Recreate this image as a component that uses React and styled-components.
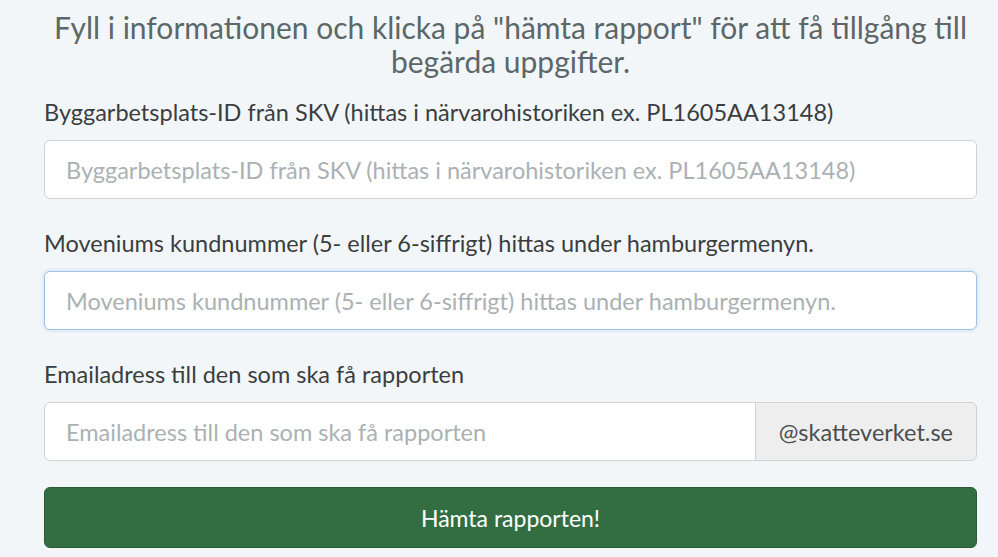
import React from 'react';
import styled, { createGlobalStyle } from 'styled-components';

const GlobalStyle = createGlobalStyle`
  body, html {
    margin: 0;
    padding: 0;
    background-color: #f3f6f9;
    font-family: Lato, "Open Sans", sans-serif;
  }
`;

const Page = styled.div`
  padding: 10px 21px 0 44px;
  box-sizing: border-box;
  width: 998px;
  height: 557px;
  overflow: hidden;
`;

const Heading = styled.h1`
  margin: 0 0 19px;
  font-size: 30px;
  line-height: 34px;
  font-weight: 400;
  color: #5b6768;
  text-align: center;
`;

const Form = styled.form`
  display: flex;
  flex-direction: column;
  gap: 29px;
`;

const Group = styled.div`
  display: flex;
  flex-direction: column;
  gap: 13px;
`;

const Label = styled.label`
  font-size: 23.5px;
  line-height: 30px;
  color: #3a3e3f;
`;

const Input = styled.input`
  box-sizing: border-box;
  height: 59px;
  width: 100%;
  min-width: 0;
  padding: 0 21px;
  font-family: inherit;
  font-size: 23.5px;
  color: #333;
  background: #fff;
  border: 1.5px solid ${p => (p.$focused ? '#9fc4e7' : '#cfd2d3')};
  border-radius: ${p => (p.$joined ? '6px 0 0 6px' : '6px')};
  box-shadow: ${p => (p.$focused ? '0 0 4px rgba(102, 160, 220, 0.35)' : 'none')};
  outline: none;

  &::placeholder {
    color: #abb1b3;
  }
`;

const InputRow = styled.div`
  display: flex;
`;

const Addon = styled.span`
  box-sizing: border-box;
  flex: none;
  display: flex;
  align-items: center;
  height: 59px;
  padding: 0 23px;
  font-size: 23.5px;
  color: #4a4e4f;
  background: #eeeeee;
  border: 1.5px solid #cfd2d3;
  border-radius: 0 6px 6px 0;
  margin-left: -1.5px;
`;

const Submit = styled.button`
  margin-top: -3px;
  height: 61px;
  width: 100%;
  font-family: inherit;
  font-size: 23px;
  color: #fff;
  background: #336e42;
  border: 1px solid #2a5a36;
  border-radius: 6px;
  cursor: pointer;
`;

const fields = [
  { text: 'Byggarbetsplats-ID från SKV (hittas i närvarohistoriken ex. PL1605AA13148)' },
  { text: 'Moveniums kundnummer (5- eller 6-siffrigt) hittas under hamburgermenyn.', focused: true },
];

export default function App() {
  return (
    <Page>
      <GlobalStyle />
      <Heading>
        Fyll i informationen och klicka på "hämta rapport" för att få tillgång till begärda uppgifter.
      </Heading>
      <Form onSubmit={e => e.preventDefault()}>
        {fields.map(f => (
          <Group key={f.text}>
            <Label>{f.text}</Label>
            <Input placeholder={f.text} $focused={f.focused} />
          </Group>
        ))}
        <Group>
          <Label>Emailadress till den som ska få rapporten</Label>
          <InputRow>
            <Input placeholder="Emailadress till den som ska få rapporten" $joined />
            <Addon>@skatteverket.se</Addon>
          </InputRow>
        </Group>
        <Submit type="submit">Hämta rapporten!</Submit>
      </Form>
    </Page>
  );
}
